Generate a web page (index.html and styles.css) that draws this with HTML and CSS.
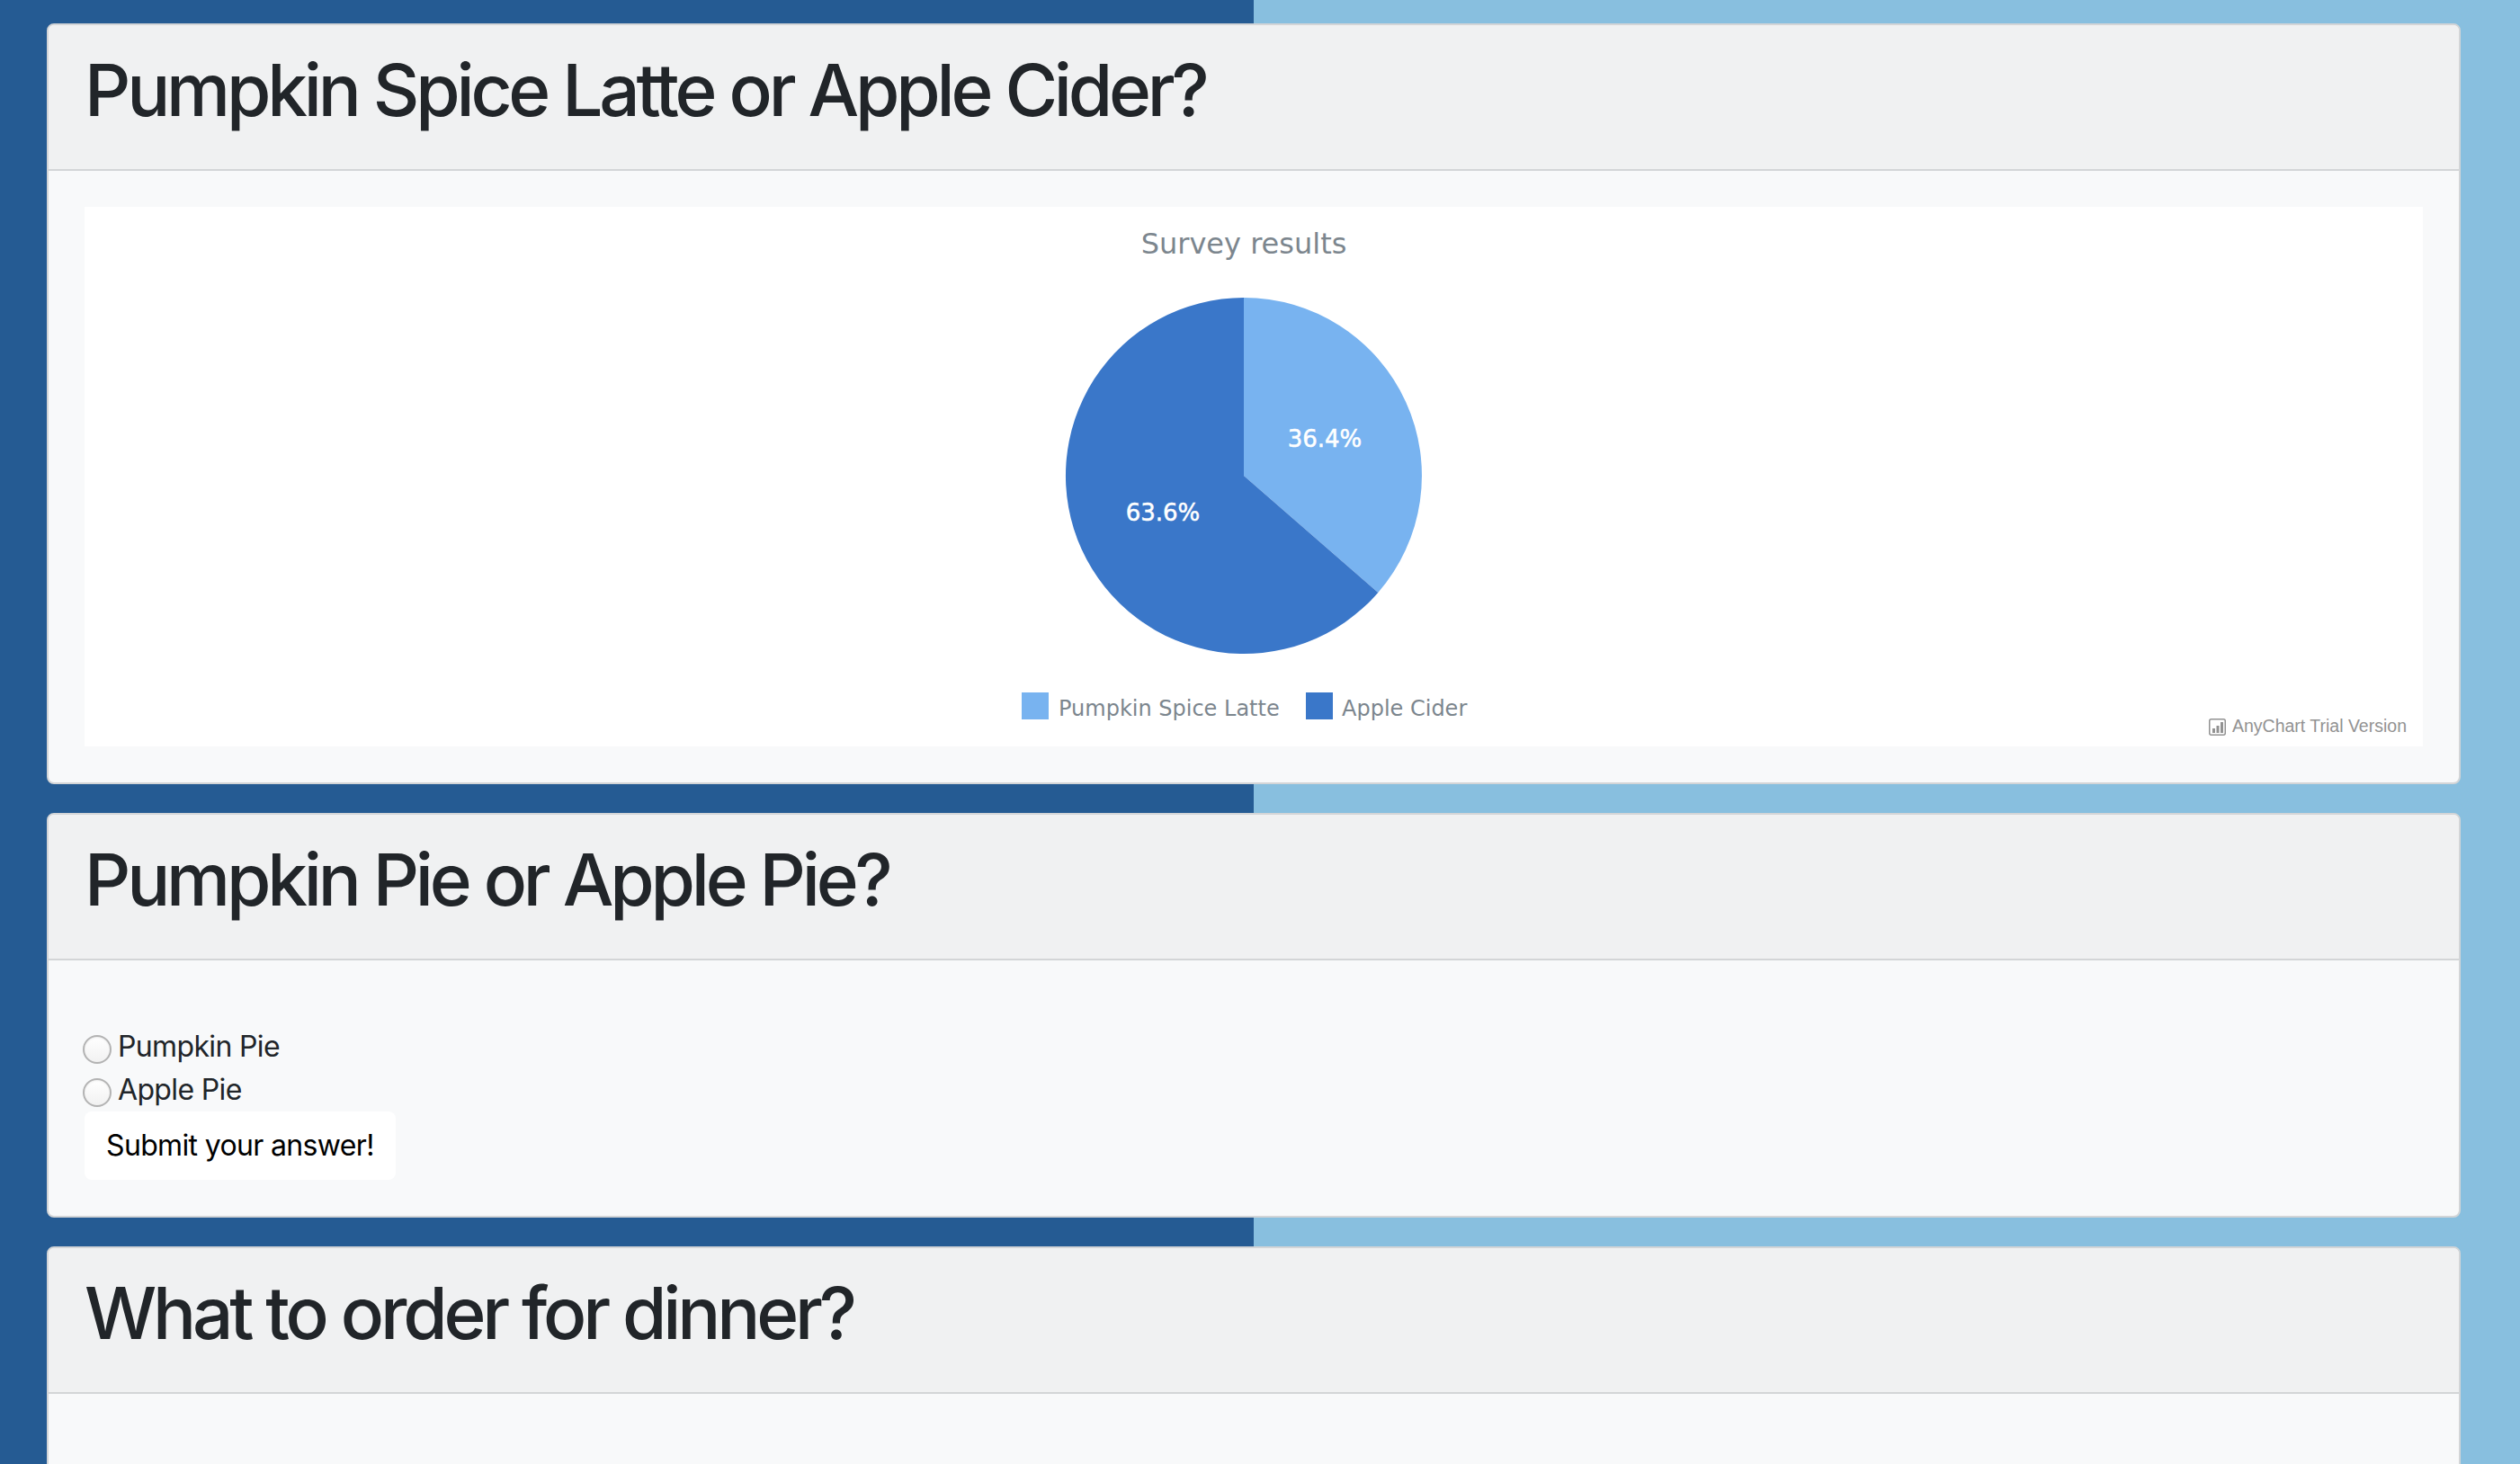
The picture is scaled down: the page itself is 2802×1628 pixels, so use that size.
FILE: index.html
```html
<!DOCTYPE html>
<html lang="en">
<head>
<meta charset="utf-8">
<title>Polls</title>
<link rel="stylesheet" href="styles.css">
</head>
<body>
<div class="page">
  <section class="card">
    <header class="card-header"><h1 class="card-title">Pumpkin Spice Latte or Apple Cider?</h1></header>
    <div class="card-body">
      <div class="chart">
        <svg class="chart-svg" width="2600" height="600" viewBox="0 0 2600 600">
          <text class="chart-title" x="1289" y="52" text-anchor="middle">Survey results</text>
          <path d="M1289 299 L1289 101 A198 198 0 0 1 1438.3 429 Z" fill="#78b3f0"/>
          <path d="M1289 299 L1438.3 429 A198 198 0 1 1 1289 101 Z" fill="#3a77c9"/>
          <text class="slice-label" x="1379" y="267" text-anchor="middle">36.4%</text>
          <text class="slice-label" x="1199" y="349" text-anchor="middle">63.6%</text>
          <rect x="1042" y="540" width="30" height="30" fill="#78b3f0"/>
          <text class="legend-text" x="1083" y="566">Pumpkin Spice Latte</text>
          <rect x="1358" y="540" width="30" height="30" fill="#3a77c9"/>
          <text class="legend-text" x="1398" y="566">Apple Cider</text>
          <g class="credits-icon">
            <rect x="2362.75" y="569.75" width="17.5" height="17.5" rx="2" fill="none" stroke="#929292" stroke-width="1.5"/>
            <rect x="2366" y="580" width="3" height="5" fill="#929292"/>
            <rect x="2370.5" y="577" width="3" height="8" fill="#929292"/>
            <rect x="2375" y="573" width="3" height="12" fill="#929292"/>
          </g>
          <text class="credits-text" x="2582" y="584" text-anchor="end">AnyChart Trial Version</text>
        </svg>
      </div>
    </div>
  </section>

  <section class="card">
    <header class="card-header"><h1 class="card-title">Pumpkin Pie or Apple Pie?</h1></header>
    <div class="card-body">
      <form class="poll">
        <label class="option"><input class="radio" type="radio" name="pie">Pumpkin Pie</label>
        <label class="option"><input class="radio" type="radio" name="pie">Apple Pie</label>
        <button class="submit" type="button">Submit your answer!</button>
      </form>
    </div>
  </section>

  <section class="card">
    <header class="card-header"><h1 class="card-title">What to order for dinner?</h1></header>
    <div class="card-body card-body-tall"></div>
  </section>
</div>
</body>
</html>
```

FILE: styles.css
```css
html, body {
  margin: 0;
  padding: 0;
}

body {
  height: 1628px;
  overflow: hidden;
  background: linear-gradient(to right, #255b93 0, #255b93 1394px, #88bfdf 1394px, #88bfdf 100%);
  font-family: Inter, "Liberation Sans", sans-serif;
  color: #212529;
}

.page {
  display: flex;
  flex-direction: column;
  gap: 32px;
  padding: 26px 66px 0 52px;
}

.card {
  border: 2px solid #d3d5d7;
  border-radius: 8px;
  background: #f8f9fa;
  overflow: hidden;
}

.card-header {
  background: #f0f1f2;
  border-bottom: 2px solid #d3d5d7;
  padding: 24px 40px;
}

.card-title {
  margin: 0 0 16px;
  font-size: 80px;
  line-height: 96px;
  font-weight: 500;
  letter-spacing: -4.2px;
  color: #212529;
}

.card-body {
  padding: 40px;
}

.card-body-tall {
  height: 200px;
}

.chart {
  height: 600px;
  background: #ffffff;
}

.chart-svg {
  display: block;
}

.chart-title {
  font-family: "DejaVu Sans", sans-serif;
  font-size: 32px;
  fill: #7c868e;
}

.slice-label {
  font-family: "DejaVu Sans", sans-serif;
  font-size: 26px;
  fill: #ffffff;
  stroke: #ffffff;
  stroke-width: 0.5px;
}

.legend-text {
  font-family: "DejaVu Sans", sans-serif;
  font-size: 24px;
  fill: #7c868e;
}

.credits-text {
  font-family: "Liberation Sans", Arial, sans-serif;
  font-size: 19.5px;
  fill: #929292;
}

.poll {
  display: flex;
  flex-direction: column;
  align-items: flex-start;
  padding-top: 32px;
}

.option {
  display: flex;
  align-items: center;
  height: 48px;
  font-size: 32px;
  line-height: 48px;
  letter-spacing: -0.65px;
  color: #212529;
}

.radio {
  appearance: none;
  -webkit-appearance: none;
  box-sizing: border-box;
  width: 32px;
  height: 32px;
  margin: 6px 7px 0 -2px;
  border: 2px solid #b3b3b3;
  border-radius: 50%;
  background: linear-gradient(#ffffff, #f1f1f1);
  box-shadow: inset 0 1px 2px rgba(0, 0, 0, 0.08);
}

.submit {
  height: 76px;
  padding: 12px 24px;
  border: 0;
  border-radius: 8px;
  background: #ffffff;
  font-family: Inter, "Liberation Sans", sans-serif;
  font-size: 32px;
  line-height: 48px;
  letter-spacing: -0.65px;
  color: #000000;
}
```
